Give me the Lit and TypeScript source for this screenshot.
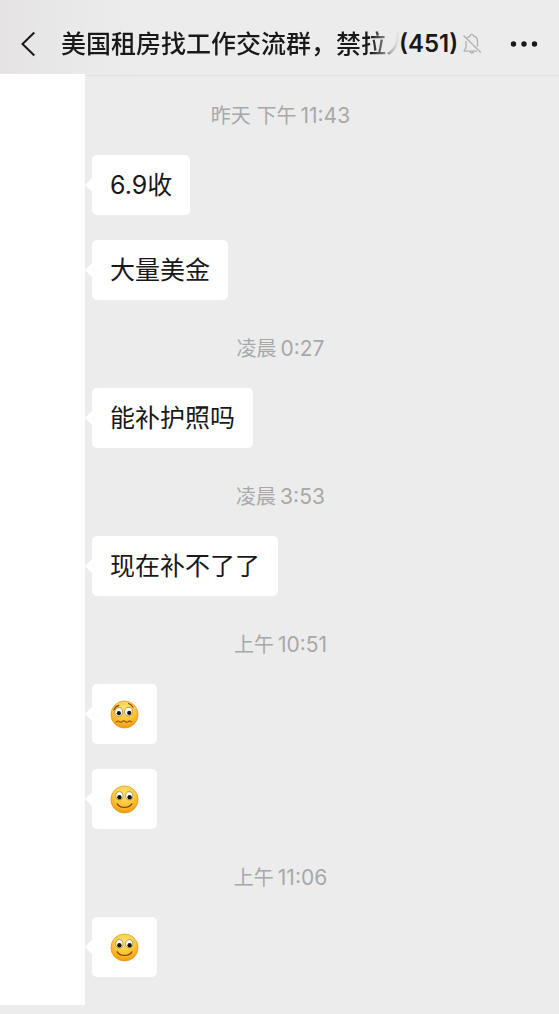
import { LitElement, html, css, svg } from "lit";
import { customElement, property } from "lit/decorators.js";

type Mood = "worried" | "smile";

type Entry =
  | { kind: "time"; day: string; clock: string }
  | { kind: "text"; latin?: string; text: string }
  | { kind: "emoji"; mood: Mood };

const ENTRIES: Entry[] = [
  { kind: "time", day: "昨天 下午", clock: "11:43" },
  { kind: "text", latin: "6.9", text: "收" },
  { kind: "text", text: "大量美金" },
  { kind: "time", day: "凌晨", clock: "0:27" },
  { kind: "text", text: "能补护照吗" },
  { kind: "time", day: "凌晨", clock: "3:53" },
  { kind: "text", text: "现在补不了了" },
  { kind: "time", day: "上午", clock: "10:51" },
  { kind: "emoji", mood: "worried" },
  { kind: "emoji", mood: "smile" },
  { kind: "time", day: "上午", clock: "11:06" },
  { kind: "emoji", mood: "smile" },
];

@customElement("chat-emoji")
export class ChatEmoji extends LitElement {
  @property() mood: Mood = "smile";

  static styles = css`
    :host {
      display: block;
      width: 29px;
      height: 29px;
    }
    .face {
      display: block;
      width: 100%;
      height: 100%;
    }
  `;

  private smile() {
    return svg`
      <ellipse cx="9.4" cy="10.8" rx="3.6" ry="4.1" fill="#fff" stroke="#9c8450" stroke-width=".8"/>
      <ellipse cx="19.2" cy="10.8" rx="3.6" ry="4.1" fill="#fff" stroke="#9c8450" stroke-width=".8"/>
      <circle cx="9.4" cy="12.3" r="2.2" fill="#16120c"/>
      <circle cx="19.6" cy="12.3" r="2.2" fill="#16120c"/>
      <path d="M7.2 18.800c1.700 2.500 4.300 3.600 7.300 3.600s5.700-1.100 7.400-3.600" fill="none" stroke="#7a4314" stroke-width="1.200" stroke-linecap="round"/>`;
  }

  private worried() {
    return svg`
      <path d="M4 10c.8-2.200 2.600-3.900 4.800-4.600M18.600 3.500c1.900.6 3.300 1.900 4.300 3.600" fill="none" stroke="#7d4312" stroke-width="1.200" stroke-linecap="round"/>
      <ellipse cx="8.700" cy="12" rx="3.900" ry="4.300" fill="#fff" stroke="#9c8450" stroke-width=".8"/>
      <ellipse cx="18.500" cy="11.600" rx="3.900" ry="4.300" fill="#fff" stroke="#9c8450" stroke-width=".8"/>
      <circle cx="8.900" cy="13.200" r="2.100" fill="#16120c"/>
      <circle cx="19.200" cy="12.900" r="2.100" fill="#16120c"/>
      <path d="M6.200 22c.7-1.200 2.200-1.400 3.200-.4 1 .9 2.200.7 3-.2.900-.9 2.100-.7 2.900.2.900 1 2.200.9 3-.1.800-.8 2.200-.7 3 .3" fill="none" stroke="#8a4a12" stroke-width="1.100" stroke-linecap="round"/>`;
  }

  render() {
    const label = this.mood === "smile" ? "微笑" : "难过";
    return html`<svg class="face" viewBox="0 0 29 29" role="img" aria-label=${label}>
      <defs>
        <radialGradient id="skin" cx=".5" cy=".28" r=".74">
          <stop offset="0" stop-color="#ffe470" />
          <stop offset=".5" stop-color="#fccb3c" />
          <stop offset=".82" stop-color="#f9ab1c" />
          <stop offset="1" stop-color="#f0900f" />
        </radialGradient>
      </defs>
      <circle cx="14.5" cy="14.5" r="13.6" fill="url(#skin)" stroke="#e0962c" stroke-width=".7" />
      ${this.mood === "smile" ? this.smile() : this.worried()}
    </svg>`;
  }
}

@customElement("chat-header")
export class ChatHeader extends LitElement {
  static styles = css`
    :host {
      display: block;
    }
    .bar {
      display: flex;
      align-items: center;
      box-sizing: border-box;
      height: 74px;
      padding: 14px 20px 0 16px;
      background: linear-gradient(90deg, #e5e3e4 0, #e9e8e9 60px, #ececec 130px);
    }
    .icon-button {
      display: flex;
      flex: none;
      align-items: center;
      justify-content: center;
      height: 40px;
      padding: 0;
      border: 0;
      background: none;
      color: #191919;
    }
    .back {
      width: 24px;
      margin-right: 21px;
    }
    .more {
      width: 30px;
      margin-left: auto;
    }
    .title {
      display: flex;
      flex: 0 1 auto;
      align-items: center;
      min-width: 0;
      margin: 0;
      color: #191919;
      font-size: 25px;
      font-weight: 500;
      line-height: 36px;
      white-space: nowrap;
    }
    .name {
      flex: 0 1 338px;
      min-width: 0;
      overflow: hidden;
      -webkit-mask-image: linear-gradient(90deg, #000 calc(100% - 28px), transparent);
      mask-image: linear-gradient(90deg, #000 calc(100% - 28px), transparent);
    }
    .count {
      flex: none;
      font-size: 24px;
      font-weight: 600;
    }
    .muted {
      flex: none;
      width: 20px;
      height: 22px;
      margin-left: 4px;
    }
  `;

  render() {
    return html`<header class="bar">
      <button class="icon-button back" aria-label="返回">
        <svg width="24" height="26" viewBox="0 0 24 26" fill="none" stroke="currentColor" stroke-width="2">
          <path d="M18.300 1.500 6.500 13l11.800 11.500" />
        </svg>
      </button>
      <h1 class="title">
        <span class="name">美国租房找工作交流群，禁拉人</span>
        <span class="count">(451)</span>
      </h1>
      <svg class="muted" viewBox="0 0 20 22" fill="none" stroke="#b2b2b2" stroke-width="1.300" role="img" aria-label="消息免打扰">
        <path d="M1.500 2.500 18.800 19.500" />
        <path d="M5.200 5.200C6 3.900 7.100 3.300 8.200 3c.2-1 .8-1.600 1.600-1.600s1.500.6 1.700 1.600c2.500.6 4 2.600 4 5.200v5.600M4 8v6.500L2.200 17.600v.6H15" />
        <path d="M8 18.500c.3 1 1 1.500 1.900 1.500s1.600-.5 1.900-1.500" />
      </svg>
      <button class="icon-button more" aria-label="更多">
        <svg width="28" height="8" viewBox="0 0 28 8" fill="currentColor">
          <circle cx="3.500" cy="4" r="2.700" />
          <circle cx="14" cy="4" r="2.700" />
          <circle cx="24.500" cy="4" r="2.700" />
        </svg>
      </button>
    </header>`;
  }
}

@customElement("app-root")
export class AppRoot extends LitElement {
  static styles = css`
    :host {
      display: block;
      min-height: 100vh;
      background: #ececec;
      color: #191919;
      font-family: Inter, "Noto Sans CJK SC", sans-serif;
    }
    .chat {
      display: grid;
      grid-template-columns: 85px 1fr;
    }
    .rail {
      grid-area: 1 / 1;
      background: #fff;
    }
    .divider {
      grid-area: 1 / 2;
      align-self: start;
      height: 1px;
      margin-top: 1px;
      background: #e0e0e0;
    }
    .log {
      grid-area: 1 / 1 / 2 / 3;
      display: flex;
      flex-direction: column;
      align-items: flex-start;
      margin: 0;
      padding: 27px 20px 28px 92px;
      list-style: none;
    }
    .time {
      display: flex;
      align-self: stretch;
      align-items: baseline;
      justify-content: center;
      gap: 4px;
      margin: 34px -20px 24px -90px;
      color: #a8a8a8;
      font-size: 20px;
      font-weight: 400;
      line-height: 30px;
    }
    .clock {
      font-size: 21px;
    }
    .time:first-child {
      margin-top: 0;
    }
    .bubble {
      position: relative;
      display: flex;
      align-items: center;
      box-sizing: border-box;
      min-height: 60px;
      padding: 12px 18px;
      border-radius: 5px;
      background: #fff;
      font-size: 25px;
      line-height: 36px;
    }
    .bubble::before {
      content: "";
      position: absolute;
      top: 22px;
      left: -7px;
      width: 8px;
      height: 16px;
      background: #fff;
      clip-path: polygon(0 50%, 100% 0, 100% 100%);
    }
    .bubble + .bubble {
      margin-top: 25px;
    }
  `;

  private entry(e: Entry) {
    if (e.kind === "time") {
      return html`<li class="time"><span>${e.day}</span><span class="clock">${e.clock}</span></li>`;
    }
    if (e.kind === "emoji") {
      return html`<li class="bubble"><chat-emoji mood=${e.mood}></chat-emoji></li>`;
    }
    return html`<li class="bubble">${e.latin ? html`<span>${e.latin}</span>` : null}<span>${e.text}</span></li>`;
  }

  render() {
    return html`
      <chat-header></chat-header>
      <main class="chat">
        <div class="rail"></div>
        <div class="divider"></div>
        <ul class="log">
          ${ENTRIES.map((e) => this.entry(e))}
        </ul>
      </main>
    `;
  }
}
